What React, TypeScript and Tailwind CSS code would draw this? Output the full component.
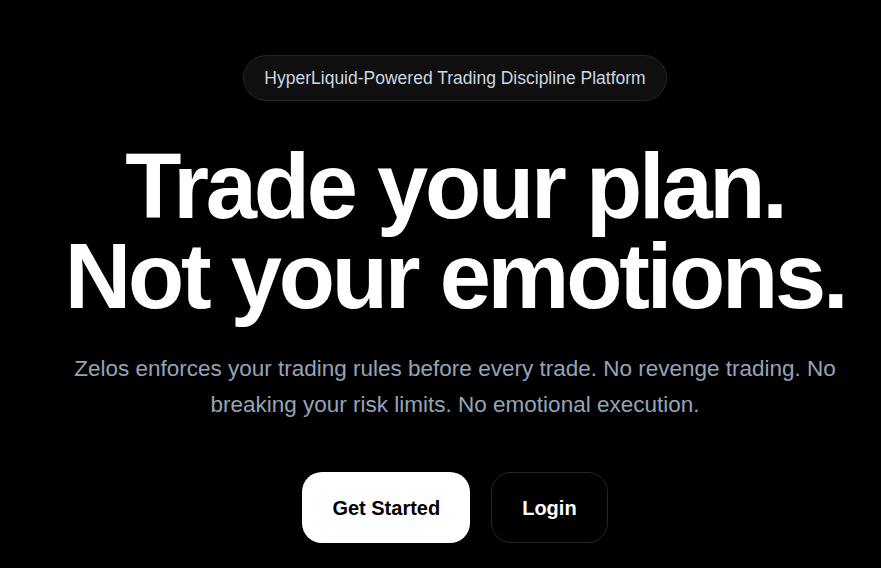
import React from 'react';

const font = { fontFamily: '"Liberation Sans", Arial, sans-serif' };

const Hero: React.FC = () => {
  return (
    <div className="w-[910px] mx-auto flex flex-col items-center pt-[55px]">
      {/* Tagline pill */}
      <div className="rounded-full border border-[#262626] bg-[#0f0f0f] px-5 py-[10px] text-[17.5px] leading-6 text-[#cdd6e2]">
        HyperLiquid-Powered Trading Discipline Platform
      </div>

      {/* Headline */}
      <h1 className="mt-10 text-center text-[92px] leading-[90px] font-bold text-white tracking-[-3.2px]">
        Trade your plan.
        <br />
        Not your emotions.
      </h1>

      {/* Subheading */}
      <p className="mt-[30px] max-w-[790px] text-center text-[22.5px] leading-9 text-[#94a3b8]">
        Zelos enforces your trading rules before every trade. No revenge trading. No breaking your
        risk limits. No emotional execution.
      </p>

      {/* Actions */}
      <div className="mt-[49px] flex gap-[21px]">
        <button className="h-[71px] rounded-[20px] bg-white px-[30px] text-xl font-bold text-black">
          Get Started
        </button>
        <button className="h-[71px] rounded-[20px] border border-[#262626] bg-black px-[30px] text-xl font-bold text-white">
          Login
        </button>
      </div>
    </div>
  );
};

export default function App() {
  return (
    <div className="min-h-screen w-full overflow-hidden bg-black" style={font}>
      <Hero />
    </div>
  );
}
